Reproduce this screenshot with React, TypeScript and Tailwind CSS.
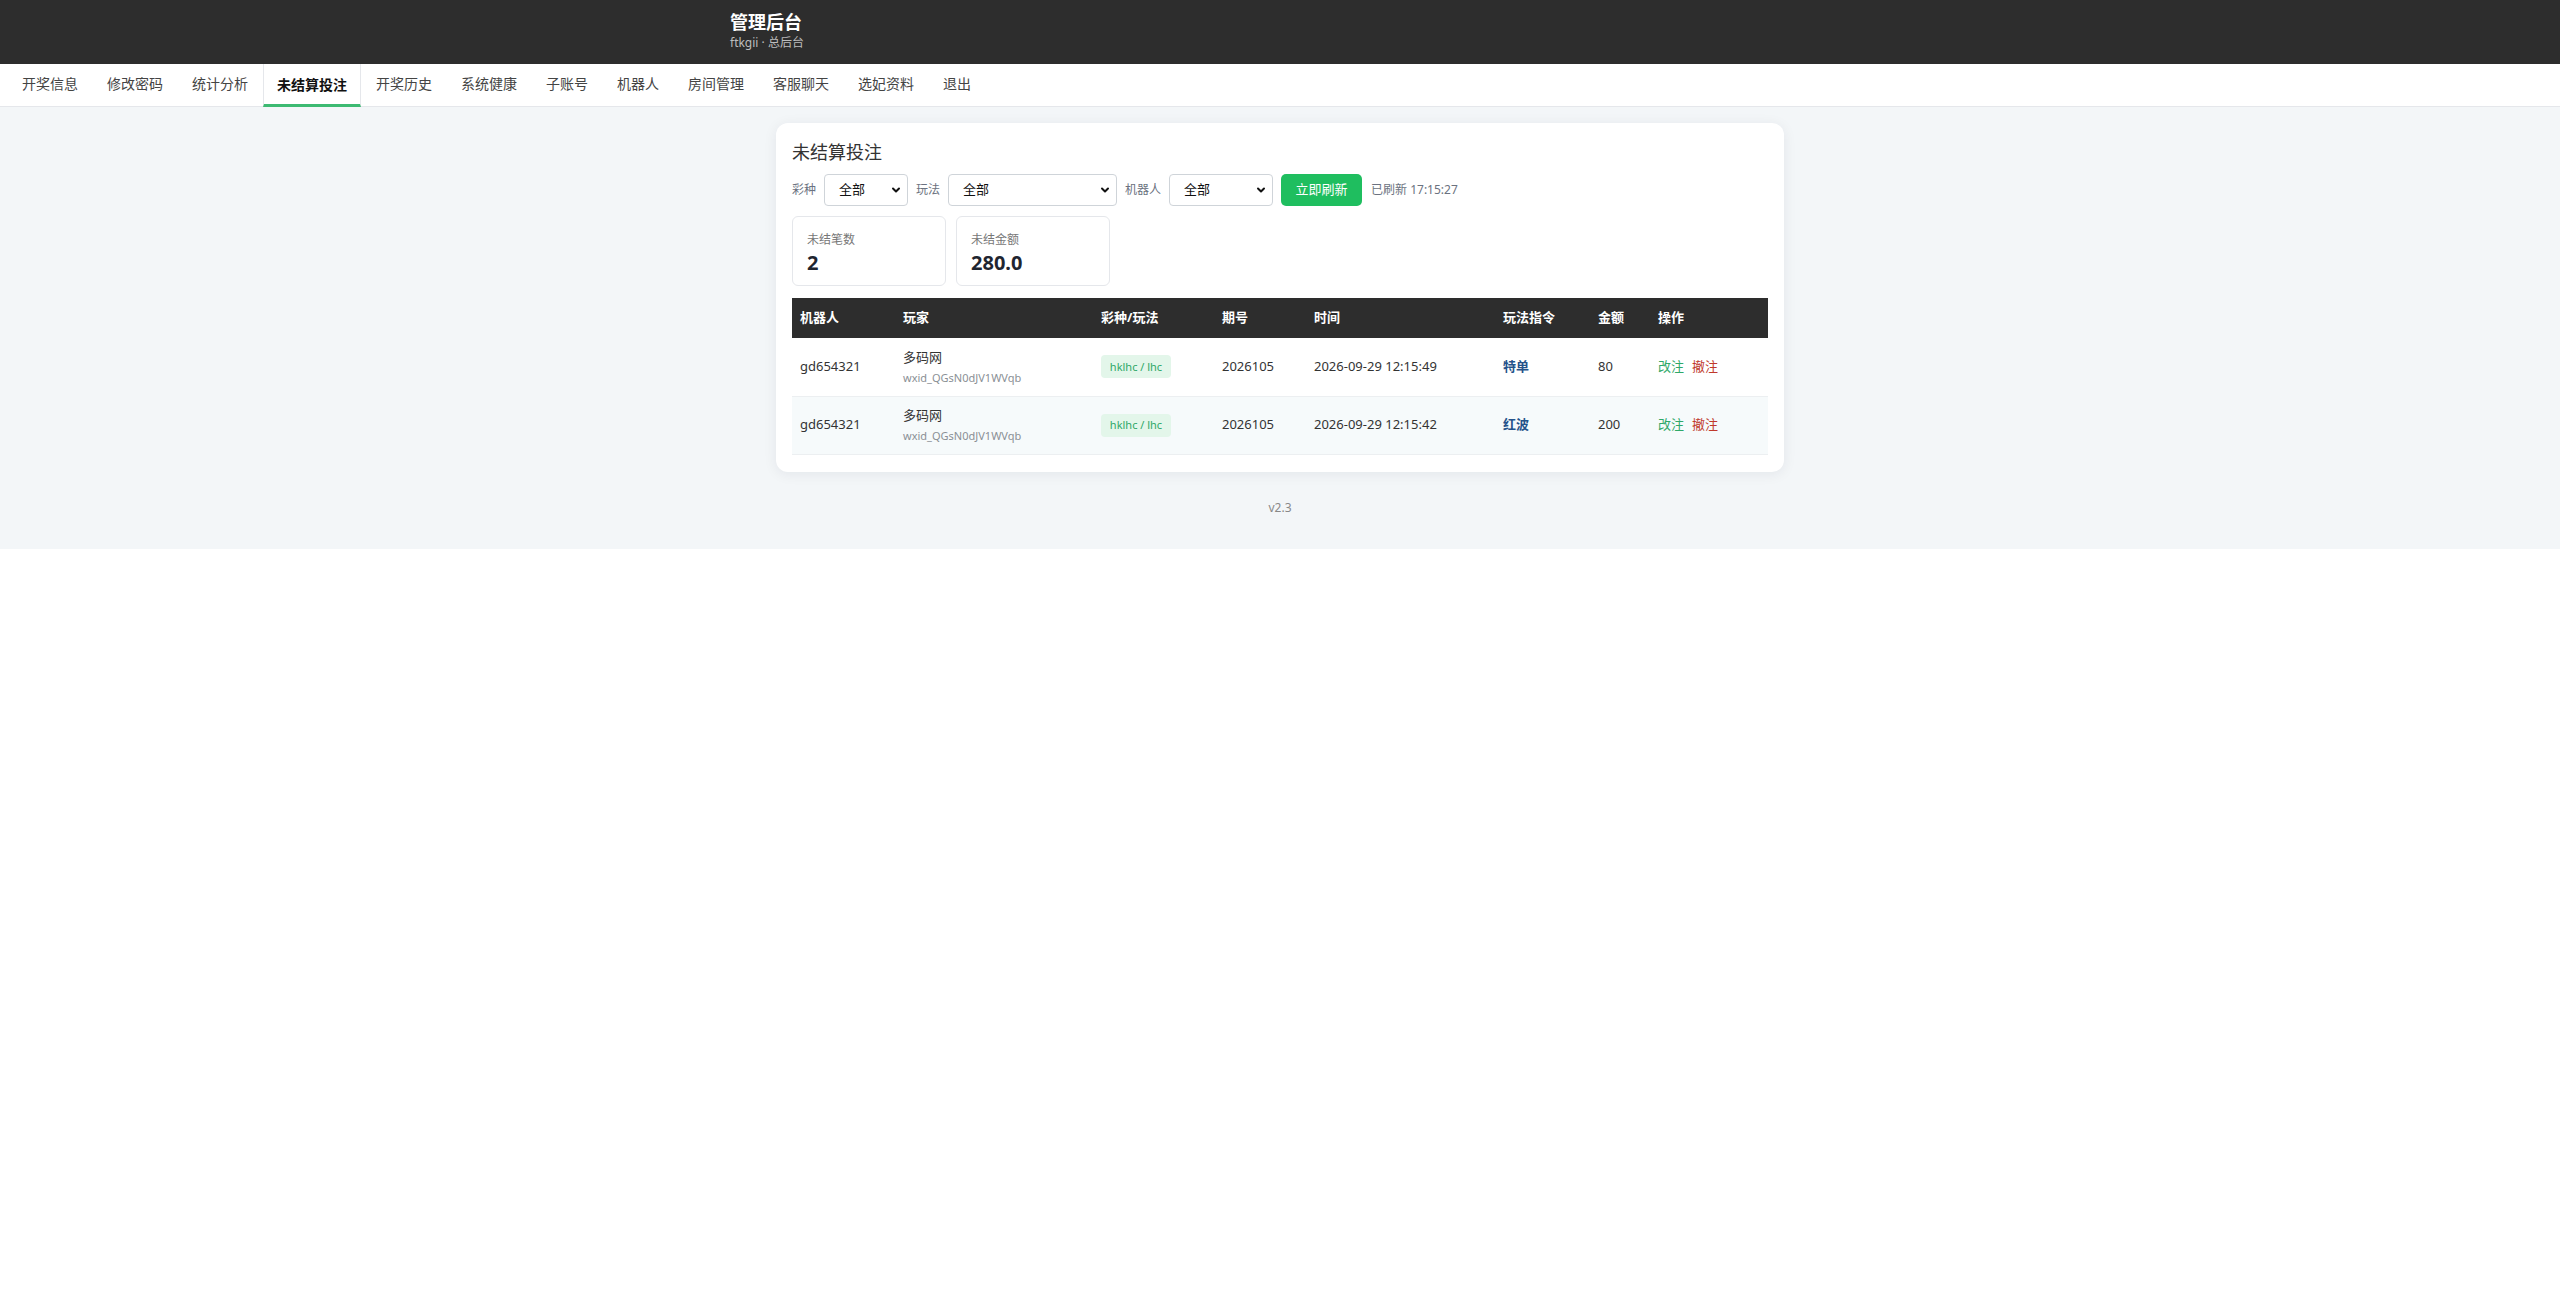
const tabs = ['开奖信息', '修改密码', '统计分析', '未结算投注', '开奖历史', '系统健康', '子账号', '机器人', '房间管理', '客服聊天', '选妃资料', '退出'];

const bets = [
  { robot: 'gd654321', name: '多码网', wxid: 'wxid_QGsN0dJV1WVqb', game: 'hklhc / lhc', issue: '2026105', time: '2026-09-29 12:15:49', cmd: '特单', amount: '80' },
  { robot: 'gd654321', name: '多码网', wxid: 'wxid_QGsN0dJV1WVqb', game: 'hklhc / lhc', issue: '2026105', time: '2026-09-29 12:15:42', cmd: '红波', amount: '200' },
];

// 未结算投注页：顶部标题栏 + 菜单 + 筛选 + 汇总 + 列表
export default function App() {
  return (
    <div className="font-['Segoe_UI','Noto_Sans','Noto_Sans_CJK_SC',sans-serif] text-[#333]">
      <header className="bg-[#2d2d2d]">
        <div className="mx-auto w-[1100px] pt-[10px] pb-[12px]">
          <div className="text-[18px] font-bold leading-[24px] text-white">管理后台</div>
          <div className="text-[12px] leading-[18px] text-[#bdbdbd]">ftkgii · 总后台</div>
        </div>
      </header>

      <nav className="flex gap-px border-b border-[#e5e7eb] bg-white px-2">
        {tabs.map((t) => {
          const active = t === '未结算投注';
          return (
            <div
              key={t}
              className={
                active
                  ? 'mb-[-1px] flex h-[43px] items-center border-x border-b-[3px] border-x-[#e5e7eb] border-b-[#3dba72] px-[13px] text-[14px] font-bold text-[#111]'
                  : 'flex h-[42px] items-center border-b-[3px] border-transparent px-[14px] text-[14px] text-[#444]'
              }>
              {t}
            </div>
          );
        })}
      </nav>

      <main className="bg-[#f3f6f8] pt-4">
        <section className="mx-auto w-[1008px] rounded-xl bg-white px-4 pt-4 pb-[17px] shadow-[0_2px_14px_rgba(15,30,50,0.07)]">
          <h2 className="text-[18px] leading-[27px] text-[#333]">未结算投注</h2>

          <div className="mt-2 flex h-8 items-center gap-2 text-[12px] text-[#6b7280]">
            <span>彩种</span>
            <Select width="w-[84px]" />
            <span>玩法</span>
            <Select width="w-[169px]" />
            <span>机器人</span>
            <Select width="w-[104px]" />
            <button className="h-8 w-[81px] rounded-[5px] bg-[#1fbe5f] text-[13px] text-white">立即刷新</button>
            <span className="ml-px">已刷新 17:15:27</span>
          </div>

          <div className="mt-[10px] flex gap-[10px]">
            <Stat label="未结笔数" value="2" />
            <Stat label="未结金额" value="280.0" />
          </div>

          <table className="mt-3 w-full table-fixed border-collapse text-left text-[13px]">
            <colgroup>
              <col className="w-[103px]" />
              <col className="w-[198px]" />
              <col className="w-[121px]" />
              <col className="w-[92px]" />
              <col className="w-[189px]" />
              <col className="w-[95px]" />
              <col className="w-[60px]" />
              <col className="w-[118px]" />
            </colgroup>
            <thead>
              <tr className="h-10 bg-[#2d2d2d] font-bold text-white">
                {['机器人', '玩家', '彩种/玩法', '期号', '时间', '玩法指令', '金额', '操作'].map((h) => (
                  <th key={h} className="px-2 font-bold">{h}</th>
                ))}
              </tr>
            </thead>
            <tbody>
              {bets.map((b, i) => (
                <tr key={b.time} className={(i % 2 ? 'bg-[#f6fafb] ' : 'bg-white ') + 'h-[58px] border-b border-[#eceff1]'}>
                  <td className="px-2">{b.robot}</td>
                  <td className="px-2">
                    <div className="leading-[22px]">{b.name}</div>
                    <div className="text-[11px] leading-[20px] text-[#8a8f95]">{b.wxid}</div>
                  </td>
                  <td className="px-2">
                    <span className="inline-flex h-[23px] w-[70px] items-center justify-center rounded bg-[#e3f6ea] text-[11px] text-[#2fa868]">{b.game}</span>
                  </td>
                  <td className="px-2">{b.issue}</td>
                  <td className="px-2">{b.time}</td>
                  <td className="px-2 font-semibold text-[#24528a]">{b.cmd}</td>
                  <td className="px-2">{b.amount}</td>
                  <td className="px-2">
                    <span className="mr-2 text-[#2fa868]">改注</span>
                    <span className="text-[#c0392b]">撤注</span>
                  </td>
                </tr>
              ))}
            </tbody>
          </table>
        </section>

        <footer className="pt-[27px] pb-8 text-center text-[12px] leading-[18px] text-[#888]">v2.3</footer>
      </main>
    </div>
  );
}

function Select({ width }: { width: string }) {
  return (
    <div className={width + ' flex h-8 items-center justify-between rounded-[4px] border border-[#cfd4d9] bg-white pl-[14px] pr-[6px] text-[13px] text-[#111]'}>
      <span>全部</span>
      <svg width="10" height="10" viewBox="0 0 10 10" fill="none" stroke="#111" strokeWidth="2" strokeLinecap="round" strokeLinejoin="round">
        <path d="M2 3.5 5 6.5 8 3.5" />
      </svg>
    </div>
  );
}

function Stat({ label, value }: { label: string; value: string }) {
  return (
    <div className="flex h-[70px] w-[154px] flex-col rounded-md border border-[#e5e7eb] px-[14px] pt-[14px]">
      <span className="text-[12px] leading-[18px] text-[#777]">{label}</span>
      <span className="text-[20px] font-bold leading-[28px] text-[#1f2530]">{value}</span>
    </div>
  );
}
